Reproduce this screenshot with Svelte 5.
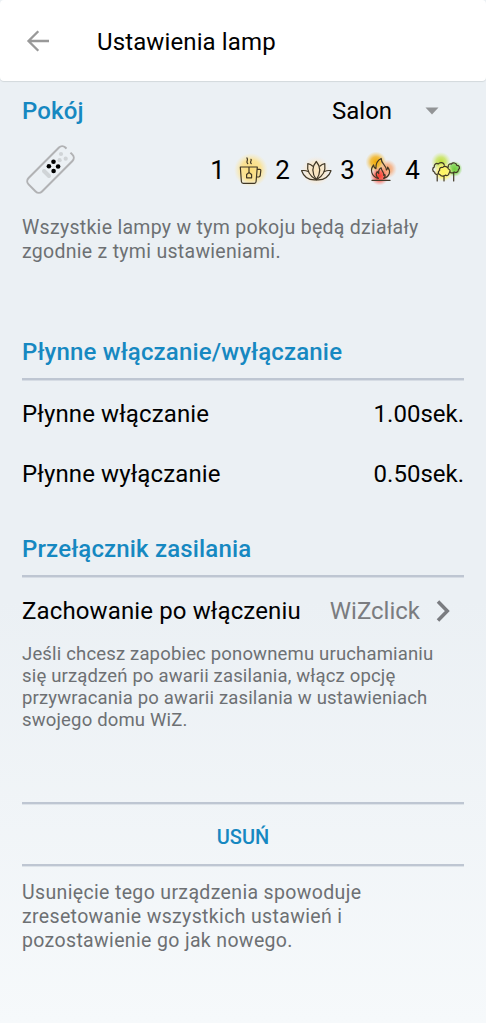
<script>
  const fades = [
    { label: 'Płynne włączanie', value: '1.00sek.' },
    { label: 'Płynne wyłączanie', value: '0.50sek.' }
  ];
</script>

<main class="screen">
  <header class="bar">
    <svg class="back" viewBox="0 0 24 24" width="24" height="24" aria-hidden="true">
      <path d="M23 12H3M12.3 2.2 2.500 12l9.800 9.800" />
    </svg>
    <h1>Ustawienia lamp</h1>
  </header>

  <div class="content">
    <div class="room">
      <h2>Pokój</h2>
      <span class="room-name">Salon</span>
      <svg viewBox="0 0 14 8" width="14" height="8" aria-hidden="true"><path d="M.5.5h13L7 7.5z" fill="#929496" /></svg>
    </div>

    <div class="modes">
      <svg class="remote" viewBox="22 142 56 56" width="56" height="56" aria-hidden="true">
        <rect x="24.5" y="160" width="52" height="19" rx="4.5" transform="rotate(-45 50.5 169.5)" fill="none" stroke="#b1b2b4" stroke-width="2" />
        <path d="m66.600 148.600 4 4" stroke="#ebf0f4" stroke-width="4.2" />
        <path d="m44 171 5 5" stroke="#d0d4d7" stroke-width="4" stroke-linecap="round" />
        <g fill="#d0d4d7"><circle cx="61" cy="154" r="2.1" /><circle cx="65.7" cy="158.7" r="2.1" /><circle cx="59.6" cy="160.2" r="2.1" /></g>
        <g fill="#000"><circle cx="53.5" cy="161.7" r="2.3" /><circle cx="48.9" cy="166.2" r="2.3" /><circle cx="58.1" cy="166.5" r="2.3" /><circle cx="53.6" cy="171" r="2.3" /></g>
      </svg>

      <div class="scenes">
        <span>1</span>
        <svg viewBox="231 150 38 38" width="38" height="38" aria-hidden="true">
          <defs><radialGradient id="gold"><stop offset="0" stop-color="#fbdc78" /><stop offset=".6" stop-color="#fbe18e" stop-opacity=".9" /><stop offset="1" stop-color="#fbe9ad" stop-opacity="0" /></radialGradient></defs>
          <circle cx="251" cy="169" r="17" fill="url(#gold)" />
          <g class="ink">
            <path d="M240.3 166h17l-1.2 14.5q-.1 1.8-1.8 1.8h-11q-1.700 0-1.900-1.800zM257.200 168.300h2.400q1.300 0 1.200 1.300l-.6 5.100q-.2 1.300-1.500 1.300h-2.100M249 166v5.500M249 171.500l-2.400 2v3.300h5v-3.300zM247.700 162.500c-2.200-2 1-3-.8-5.600M251.200 162.500c-2-1.700.9-2.400-.2-4.200" />
          </g>
        </svg>
        <span>2</span>
        <svg viewBox="296 150 38 38" width="38" height="38" aria-hidden="true">
          <defs><radialGradient id="peach"><stop offset="0" stop-color="#fbe3b7" /><stop offset=".6" stop-color="#fae8ca" stop-opacity=".8" /><stop offset="1" stop-color="#f4e9df" stop-opacity="0" /></radialGradient></defs>
          <circle cx="316" cy="170" r="15" fill="url(#peach)" />
          <g class="ink">
            <path d="M316.300 160.500c-4.500 5.200-4.200 12 0 18.200 4.200-6.200 4.500-13 0-18.200z" />
            <path d="M312.800 165.200q-2.300-2.200-5-2.600c-1 6.700 2.200 12.800 8.500 16.100 6.300-3.300 9.500-9.400 8.500-16.100q-2.700.4-5 2.600" />
            <path d="M308.200 170.500q-3.300-1.500-6.600-.8c2.100 6 7.400 9.600 14.700 9 7.300.6 12.600-3 14.700-9q-3.300-.7-6.600.8" />
          </g>
        </svg>
        <span>3</span>
        <svg viewBox="361 150 38 38" width="38" height="38" aria-hidden="true">
          <defs>
            <radialGradient id="amber"><stop offset="0" stop-color="#efa900" /><stop offset=".5" stop-color="#f3b21b" stop-opacity=".8" /><stop offset="1" stop-color="#f5c354" stop-opacity="0" /></radialGradient>
            <radialGradient id="orange"><stop offset="0" stop-color="#f49c61" /><stop offset=".5" stop-color="#f6ad7d" stop-opacity=".8" /><stop offset="1" stop-color="#f8c4a2" stop-opacity="0" /></radialGradient>
            <radialGradient id="red"><stop offset="0" stop-color="#fa392d" /><stop offset=".5" stop-color="#fa5140" stop-opacity=".8" /><stop offset="1" stop-color="#fa9183" stop-opacity="0" /></radialGradient>
          </defs>
          <circle cx="376" cy="161" r="10.500" fill="url(#amber)" />
          <circle cx="387.500" cy="168" r="9.500" fill="url(#orange)" />
          <circle cx="379.500" cy="175" r="9.500" fill="url(#red)" />
          <g class="ink">
            <path d="M372 179.400h18M377.300 177.300c-6-2.800-7.500-8.600-3.700-13.300.2 2.100 1 3.200 2.300 3.700-.3-4.700 1.200-8.200 5.300-10.200-.2 5.400 5.200 6.700 5.200 11.500q1.300-.8 1.200-2.800c3.700 4.600 1.800 9.300-3.400 11.100" />
            <path d="M378.400 177.300c-2.300-1.900-2.800-4.300-1.200-6.600l1.500 1.800c-.3-2.700.4-4.700 2.500-5.700-.1 3.300 3.300 4.200 2.500 7.500l1.100-.8q1 2-1.100 3.800" />
          </g>
        </svg>
        <span>4</span>
        <svg viewBox="426 150 38 38" width="38" height="38" aria-hidden="true">
          <defs>
            <radialGradient id="lime"><stop offset="0" stop-color="#bedc32" /><stop offset=".5" stop-color="#c8e45a" stop-opacity=".8" /><stop offset="1" stop-color="#d6ec8b" stop-opacity="0" /></radialGradient>
            <radialGradient id="green"><stop offset="0" stop-color="#70ce3a" /><stop offset=".6" stop-color="#83d554" stop-opacity=".85" /><stop offset="1" stop-color="#a6df85" stop-opacity="0" /></radialGradient>
            <radialGradient id="lemon"><stop offset="0" stop-color="#fff45c" /><stop offset=".6" stop-color="#fff26a" stop-opacity=".85" /><stop offset="1" stop-color="#f8f3a2" stop-opacity="0" /></radialGradient>
          </defs>
          <circle cx="441" cy="161" r="10" fill="url(#lime)" />
          <circle cx="454.500" cy="168" r="8" fill="url(#green)" />
          <circle cx="443.500" cy="171" r="9.500" fill="url(#lemon)" />
          <g class="ink">
            <path d="M438.500 172.300c-1.700 2-4 .8-3.800-1-2.600-1-2.600-4.300-.4-5.400-.5-2.600 2-4.300 4-3 1.800-2.300 5.800-1.300 6 1.200M437.200 173v6.900M440.200 173.800c-2.300-.6-2.400-3.500-.6-4.300-.5-2.500 1.500-3.700 3.100-3 1.600-2 5.400-1 5.700 1.500 2.300.6 2.200 3.300.5 4.200.2 2-2 3-3.500 1.900-1.600 1.600-4.500 1.300-5.200-.3zM444 174.500v5.400M448.300 166c-.4-2.300 1.300-3.600 3-2.900 1.600-2.100 5.200-1.200 5.500 1.200 2.700-.2 3.600 2.900 1.600 4.300.1 2.300-2.400 3.700-4.200 2.300-1.400 1.500-3.600 1.300-4.600-.1M453.700 171.400v8.500" />
          </g>
        </svg>
      </div>
    </div>

    <p class="note room-note">Wszystkie lampy w tym pokoju będą działały<br />zgodnie z tymi ustawieniami.</p>

    <section>
      <h2 class="section-title">Płynne włączanie/wyłączanie</h2>
      {#each fades as fade}
        <div class="row"><span class="label">{fade.label}</span><span>{fade.value}</span></div>
      {/each}
    </section>

    <section class="power">
      <h2 class="section-title">Przełącznik zasilania</h2>
      <div class="row behavior">
        <span class="label">Zachowanie po włączeniu</span>
        <span class="choice">WiZclick
          <svg viewBox="0 0 14 22" width="14" height="22" aria-hidden="true"><path d="m2 1.500 9.300 9.500L2 20.500" /></svg>
        </span>
      </div>
      <p class="hint">Jeśli chcesz zapobiec ponownemu uruchamianiu<br />się urządzeń po awarii zasilania, włącz opcję<br />przywracania po awarii zasilania w ustawieniach<br />swojego domu WiZ.</p>
    </section>

    <button class="remove">USUŃ</button>
    <p class="note remove-note">Usunięcie tego urządzenia spowoduje<br />zresetowanie wszystkich ustawień i<br />pozostawienie go jak nowego.</p>
  </div>
</main>

<style>
  :global(body) { margin: 0; }
  * { box-sizing: border-box; }
  .screen {
    width: 486px;
    height: 1023px;
    overflow: hidden;
    font-family: Roboto, sans-serif;
    color: #000;
    background: linear-gradient(#ebf0f4 0, #ebf0f4 600px, #f6f9fb 1023px);
  }
  h1, h2, p { margin: 0; font-weight: 400; }
  .bar {
    height: 81px;
    padding-left: 26px;
    display: flex;
    align-items: center;
    background: #fff;
    border-radius: 4px;
    box-shadow: 0 1px 1px #d3d9dc;
  }
  .back { fill: none; stroke: #999; stroke-width: 2.300; }
  h1 { margin-left: 47px; padding-top: 3px; font-size: 24px; line-height: 30px; letter-spacing: .12px; }
  .content { padding: 0 22px; }
  .room { height: 60px; display: flex; align-items: center; }
  h2 { color: #1688c1; font-size: 24px; font-weight: 500; line-height: 30px; letter-spacing: .16px; }
  .room h2 { width: 310px; }
  .room-name { width: 93px; font-size: 24px; }
  .modes { height: 58px; display: flex; justify-content: space-between; align-items: center; }
  .remote { flex: none; }
  .scenes { display: flex; align-items: center; font-size: 26px; }
  .scenes span { width: 27px; text-align: center; }
  .ink { fill: none; stroke: #403725; stroke-width: 1.200; stroke-linecap: round; stroke-linejoin: round; }
  .note { color: #6d7073; font-size: 19.500px; line-height: 24px; letter-spacing: .29px; }
  .room-note { margin-top: 17px; height: 121px; }
  .section-title { height: 43px; border-bottom: 2px solid #bec6d2; box-shadow: 0 1px 0 #d6dce4; }
  .row { height: 60px; display: flex; align-items: center; justify-content: space-between; font-size: 24px; line-height: 30px; padding-top: 7px; }
  .label { letter-spacing: .13px; }
  .power { margin-top: 34px; }
  .choice { display: flex; align-items: center; color: #7a7c80; gap: 16px; margin-right: 14px; }
  .choice svg { fill: none; stroke: #7a7c80; stroke-width: 3.500; }
  .hint { color: #6d7073; font-size: 18.500px; line-height: 22px; letter-spacing: .17px; margin-top: 6px; }
  .remove {
    display: block;
    width: 100%;
    height: 64px;
    margin-top: 71px;
    padding: 5px 0 0;
    border: 0 solid #bec6d2;
    border-width: 2px 0;
    box-shadow: 0 1px 0 #dde3e9, inset 0 1px 0 #dde3e9;
    background: transparent;
    color: #1688c1;
    font: 500 20px/24px Roboto, sans-serif;
  }
  .remove-note { margin-top: 15px; letter-spacing: .35px; }
</style>
